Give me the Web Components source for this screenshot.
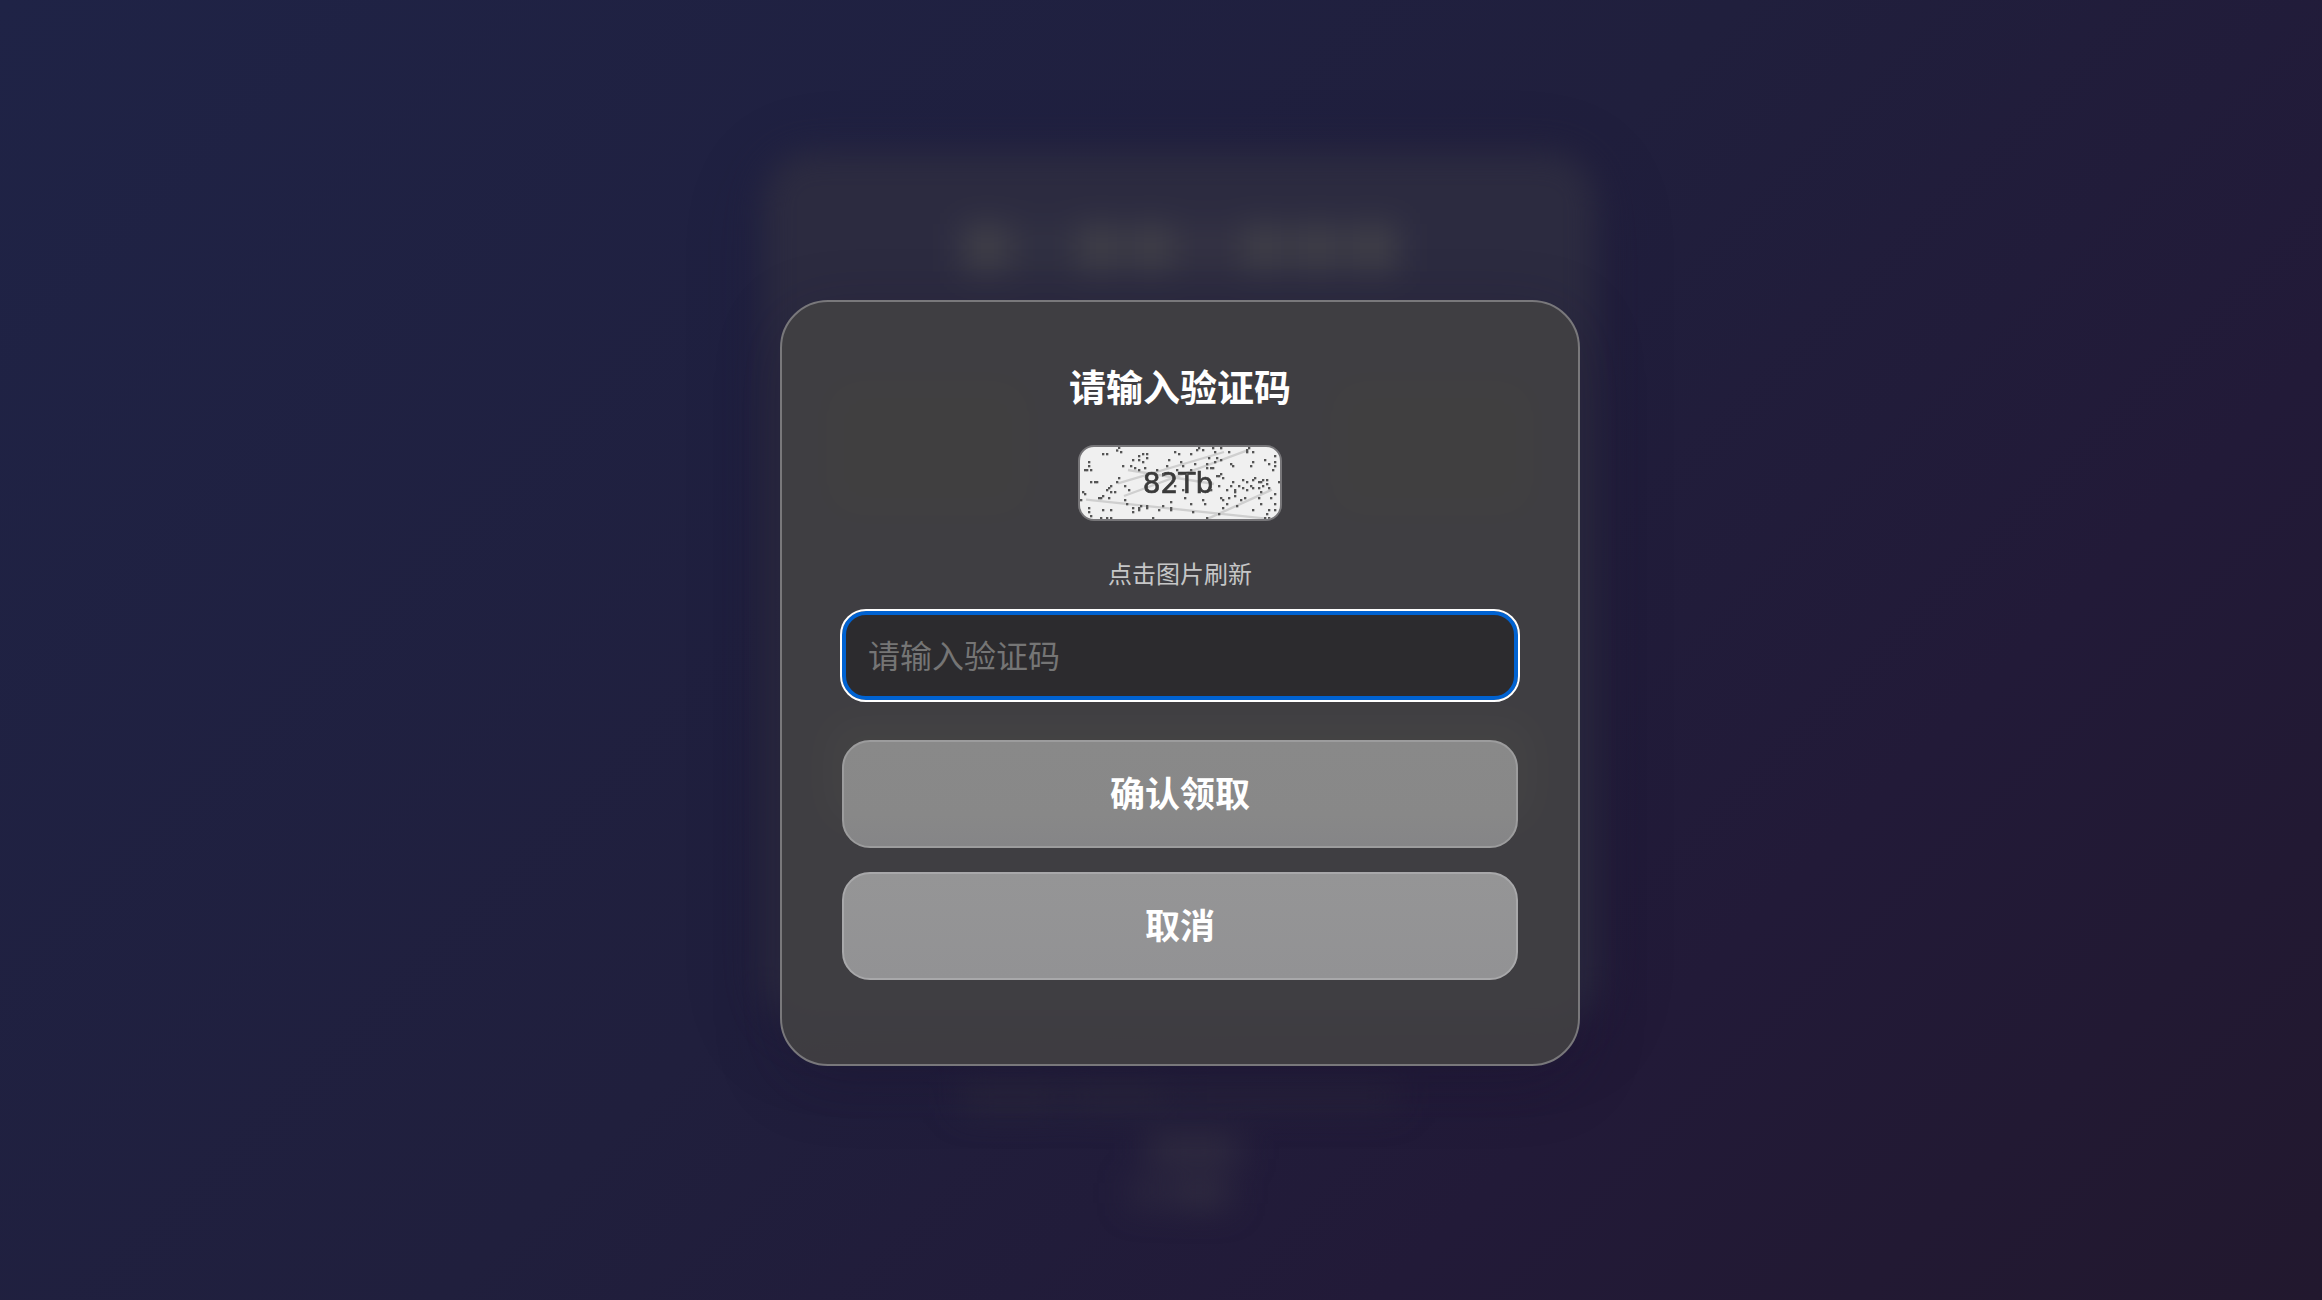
<!DOCTYPE html>
<html lang="zh-CN">
<head>
<meta charset="UTF-8">
<meta name="viewport" content="width=device-width, initial-scale=1.0">
<title>请输入验证码</title>
<style>
  body {
    margin: 0;
    min-height: 100vh;
    font-family: "Noto Sans CJK SC", sans-serif;
    background: linear-gradient(135deg, #1f2346 0%, #201f3d 48%, #221a38 74%, #22182e 100%);
    color: #fff;
  }
</style>
</head>
<body>
<claim-page>
  <page-backdrop></page-backdrop>
  <verify-dialog heading="请输入验证码">
    <captcha-image code="82Tb" slot="captcha"></captcha-image>
    <code-field label="请输入验证码"></code-field>
    <glass-button>确认领取</glass-button>
    <glass-button variant="light">取消</glass-button>
  </verify-dialog>
</claim-page>

<script>
class ClaimPage extends HTMLElement {
  connectedCallback() {
    const shadow = this.attachShadow({ mode: "open" });
    shadow.innerHTML = `
      <style>
        :host {
          display: grid;
          box-sizing: border-box;
          min-height: 100vh;
          padding: 66px 0 0 38px;
          place-items: center;
          position: relative;
          overflow: hidden;
        }
      </style>
      <slot></slot>
    `;
  }
}

// Dimmed page behind the dialog, out of focus
class PageBackdrop extends HTMLElement {
  connectedCallback() {
    const shadow = this.attachShadow({ mode: "open" });
    shadow.innerHTML = `
      <style>
        :host {
          position: absolute;
          inset: 0 0 0 38px;
          display: flex;
          flex-direction: column;
          align-items: center;
          padding-top: 152px;
          filter: blur(16px);
        }
        .card {
          box-sizing: border-box;
          width: 832px;
          height: 872px;
          padding: 72px 64px 0;
          border-radius: 48px;
          background: #2c2b40;
          box-shadow: 0 16px 64px rgba(28, 20, 50, 0.3);
        }
        .row {
          display: flex;
          justify-content: center;
          gap: 8px;
        }
        i { height: 48px; background: #403f48; }
        .tiles {
          display: flex;
          justify-content: space-between;
          margin-top: 110px;
        }
        .tiles b {
          width: 200px;
          height: 132px;
          border-radius: 24px;
          background: #38392f;
        }
        .bar {
          height: 104px;
          margin-top: 206px;
          border-radius: 28px;
          background: #54564c;
        }
        .foot { margin-top: 60px; }
        .foot i { height: 26px; background: #29263b; }
        .links { margin-top: 26px; }
        .links i { height: 26px; background: #322e41; }
        .links + .links { margin-top: 18px; }
      </style>
      <div class="card">
        <div class="row">
          <i style="width: 50px"></i>
          <i style="width: 48px; opacity: 0.3"></i>
          <i style="width: 46px"></i>
          <i style="width: 46px"></i>
          <i style="width: 48px; opacity: 0.4"></i>
          <i style="width: 46px"></i>
          <i style="width: 46px"></i>
          <i style="width: 50px"></i>
        </div>
        <div class="tiles"><b></b><b></b></div>
        <div class="bar"></div>
      </div>
      <div class="row foot">
        <i style="width: 100px"></i>
        <i style="width: 100px"></i>
        <i style="width: 220px; opacity: 0.6"></i>
      </div>
      <div class="row links"><i style="width: 92px; margin-left: 28px"></i></div>
      <div class="row links">
        <i style="width: 32px; opacity: 0.7"></i>
        <i style="width: 58px"></i>
      </div>
    `;
  }
}

class VerifyDialog extends HTMLElement {
  connectedCallback() {
    const shadow = this.attachShadow({ mode: "open" });
    shadow.innerHTML = `
      <style>
        :host {
          position: relative;
          display: block;
          width: 800px;
          max-width: 90%;
        }
        section {
          padding: 55px 60px 84px;
          border: 2px solid #79787b;
          border-radius: 48px;
          background: rgba(65, 64, 66, 0.9);
          box-shadow: 0 16px 64px rgba(28, 20, 48, 0.3);
        }
        h3 {
          margin: 0 0 30px;
          font-size: 37px;
          line-height: 58px;
          text-align: center;
        }
        .captcha {
          display: flex;
          flex-direction: column;
          align-items: center;
          gap: 34px;
        }
        p {
          margin: 0 0 20px;
          font-size: 24px;
          line-height: 36px;
          color: #c6c6c7;
        }
        .controls {
          display: flex;
          flex-direction: column;
          gap: 24px;
        }
      </style>
      <section role="dialog" aria-modal="true" aria-labelledby="title">
        <h3 id="title">${this.getAttribute("heading")}</h3>
        <div class="captcha">
          <slot name="captcha"></slot>
          <p>点击图片刷新</p>
        </div>
        <div class="controls"><slot></slot></div>
      </section>
    `;
  }
}

// Noise dots, three drawing units per pixel
const DOTS = [
  [177,53],[171,61],[183,66],[129,72],[141,72],[87,96],[87,108],[75,120],[81,120],[93,120],
  [93,156],[105,156],[111,156],[69,186],[75,192],[63,210],[87,234],[87,246],[93,258],[123,264],
  [129,240],[141,264],[153,240],[153,264],[141,180],[147,174],[117,204],[123,204],[129,198],[147,204],
  [153,186],[153,168],[171,156],[177,144],[165,186],[189,108],[219,90],[213,108],[237,78],[249,72],
  [261,72],[237,90],[249,96],[261,84],[225,114],[237,120],[255,114],[195,168],[207,180],[195,210],
  [201,222],[219,234],[219,246],[237,234],[237,240],[243,228],[261,228],[261,234],[279,264],[297,240],
  [309,228],[333,216],[333,234],[333,240],[345,66],[357,72],[327,90],[321,108],[291,120],[309,132],
  [351,120],[369,108],[363,96],[393,72],[411,60],[417,54],[429,60],[405,102],[393,120],[375,204],
  [393,222],[399,246],[429,210],[435,222],[441,264],[459,54],[465,66],[483,54],[447,84],[441,102],
  [465,96],[471,84],[483,90],[507,66],[513,102],[519,108],[453,114],[459,114],[471,138],[477,138],
  [483,132],[441,114],[381,132],[345,168],[369,180],[453,180],[477,168],[489,144],[483,204],[489,210],
  [477,252],[489,234],[501,222],[507,204],[513,168],[501,180],[525,180],[525,186],[525,198],[519,156],
  [543,210],[531,228],[555,204],[561,60],[561,66],[567,54],[579,66],[579,96],[573,108],[615,90],
  [645,78],[645,96],[645,108],[627,102],[639,120],[549,150],[561,156],[579,150],[585,144],[597,156],
  [603,156],[609,150],[573,168],[579,174],[561,180],[597,174],[609,168],[603,186],[621,162],[627,174],
  [621,150],[657,156],[645,192],[633,204],[597,204],[603,222],[579,240],[621,252],[627,240],[645,240],
  [627,264],[645,222],[615,264],[549,174],[537,168]
];

class CaptchaImage extends HTMLElement {
  connectedCallback() {
    const dots = DOTS.map(([x, y]) => `<rect x="${x - 3}" y="${y - 3}" width="7" height="7"/>`).join("");
    const shadow = this.attachShadow({ mode: "open" });
    shadow.innerHTML = `
      <style>
        :host { display: block; }
        button {
          display: block;
          padding: 0;
          border: 2px solid #777679;
          border-radius: 16px;
          background: #f0f0f0;
          overflow: hidden;
          cursor: pointer;
        }
        svg {
          display: block;
          width: 200px;
          height: 72px;
        }
        text {
          font: 84px "DejaVu Sans", sans-serif;
          fill: #3a3a3a;
          stroke: #3a3a3a;
          stroke-width: 2;
        }
        /* low resolution bitmap look */
        .soft { filter: blur(1px); }
      </style>
      <button type="button" aria-label="点击图片刷新">
        <svg viewBox="60 51 600 216">
          <g class="soft">
            <g fill="none" stroke="#cfcfcf" stroke-width="7">
              <path d="M174 160L492 66M192 198L560 62M204 120L462 162M78 209L612 265M444 266L636 179"/>
            </g>
            <text x="248" y="189">${this.getAttribute("code")}</text>
            <g fill="#555">${dots}</g>
          </g>
        </svg>
      </button>
    `;
  }
}

class CodeField extends HTMLElement {
  connectedCallback() {
    const label = this.getAttribute("label");
    const shadow = this.attachShadow({ mode: "open" });
    shadow.innerHTML = `
      <style>
        :host {
          display: block;
          margin-bottom: 16px;
        }
        input {
          display: block;
          box-sizing: border-box;
          width: 100%;
          height: 89px;
          padding: 0 22px 4px;
          border: 4px solid #0062d1;
          border-radius: 24px;
          outline: 2px solid #fff;
          background: #2c2b2e;
          color: #fff;
          font: inherit;
          font-size: 32px;
        }
        input::placeholder { color: #757575; }
      </style>
      <input type="text" aria-label="${label}" placeholder="${label}">
    `;
  }
}

class GlassButton extends HTMLElement {
  connectedCallback() {
    const shadow = this.attachShadow({ mode: "open" });
    shadow.innerHTML = `
      <style>
        :host { display: block; }
        button {
          display: block;
          width: 100%;
          padding: 24px 24px 28px;
          border: 2px solid #9c9c9d;
          border-radius: 28px;
          background: linear-gradient(#898989, #888888 70%, #858587);
          color: #fff;
          font: inherit;
          font-size: 35px;
          font-weight: 700;
          line-height: 52px;
          cursor: pointer;
        }
        :host([variant="light"]) button {
          border-color: #a8a8aa;
          background: linear-gradient(#959596, #929294);
        }
      </style>
      <button type="button"><slot></slot></button>
    `;
  }
}

customElements.define("claim-page", ClaimPage);
customElements.define("page-backdrop", PageBackdrop);
customElements.define("verify-dialog", VerifyDialog);
customElements.define("captcha-image", CaptchaImage);
customElements.define("code-field", CodeField);
customElements.define("glass-button", GlassButton);
</script>
</body>
</html>
